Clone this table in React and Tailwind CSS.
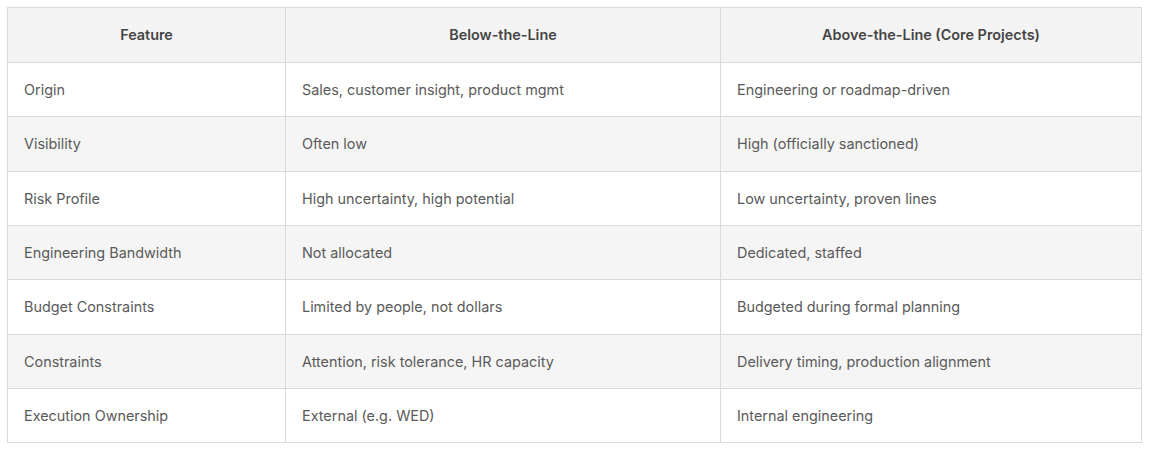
const rows = [
  ["Origin", "Sales, customer insight, product mgmt", "Engineering or roadmap-driven"],
  ["Visibility", "Often low", "High (officially sanctioned)"],
  ["Risk Profile", "High uncertainty, high potential", "Low uncertainty, proven lines"],
  ["Engineering Bandwidth", "Not allocated", "Dedicated, staffed"],
  ["Budget Constraints", "Limited by people, not dollars", "Budgeted during formal planning"],
  ["Constraints", "Attention, risk tolerance, HR capacity", "Delivery timing, production alignment"],
  ["Execution Ownership", "External (e.g. WED)", "Internal engineering"],
];

export default function App() {
  return (
    <div className="min-h-screen bg-white pl-[7px] pt-[7px] font-['Inter',sans-serif] text-[14.4px]">
      <table className="w-[1135px] table-fixed border-collapse">
        <colgroup>
          <col className="w-[278px]" />
          <col className="w-[435px]" />
          <col />
        </colgroup>

        <thead>
          <tr className="h-[55px] bg-[#f4f4f4]">
            <th className="border border-[#dadada] text-center font-semibold text-[#454545]">
              Feature
            </th>
            <th className="border border-[#dadada] text-center font-semibold text-[#454545]">
              Below-the-Line
            </th>
            <th className="border border-[#dadada] text-center font-semibold text-[#454545]">
              Above-the-Line (Core Projects)
            </th>
          </tr>
        </thead>

        <tbody>
          {rows.map((row, i) => (
            <tr key={row[0]} className={i % 2 === 1 ? "h-[54.35px] bg-[#f5f5f5]" : "h-[54.35px] bg-white"}>
              {row.map((cell) => (
                <td key={cell} className="border border-[#dadada] px-4 text-[#5a5a5a]">
                  {cell}
                </td>
              ))}
            </tr>
          ))}
        </tbody>
      </table>
    </div>
  );
}
